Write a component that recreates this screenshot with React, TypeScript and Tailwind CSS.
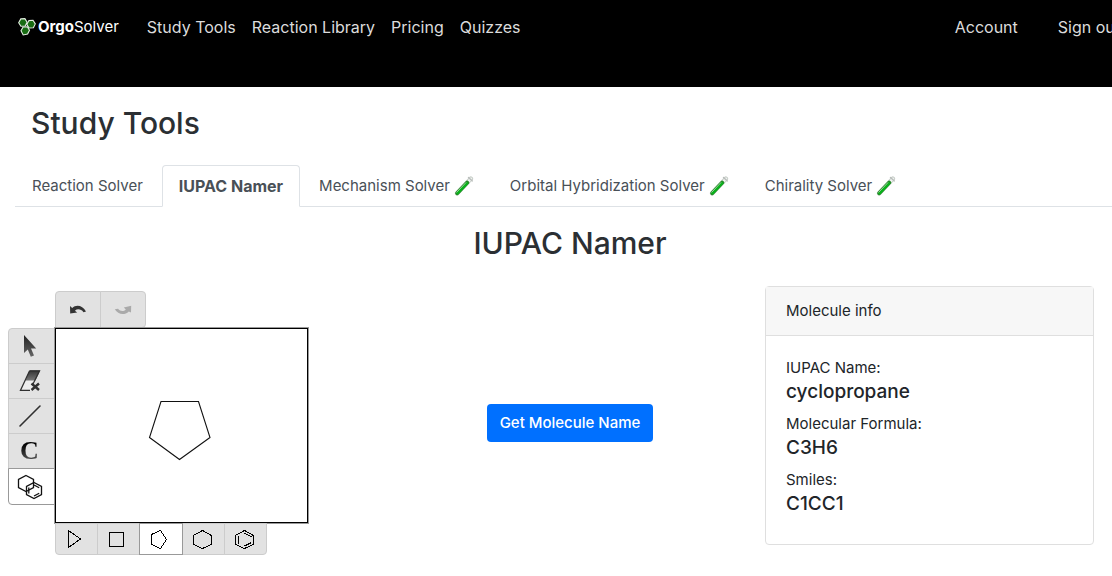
import React from "react";

const navLinks = ["Study Tools", "Reaction Library", "Pricing", "Quizzes"];
const accountLinks = ["Account", "Sign out"];

const tabs = [
  { label: "Reaction Solver" },
  { label: "IUPAC Namer", active: true },
  { label: "Mechanism Solver", beta: true },
  { label: "Orbital Hybridization Solver", beta: true },
  { label: "Chirality Solver", beta: true },
];

const moleculeInfo = [
  { label: "IUPAC Name:", value: "cyclopropane" },
  { label: "Molecular Formula:", value: "C3H6" },
  { label: "Smiles:", value: "C1CC1" },
];

const LogoIcon = () => (
  <svg width="18" height="18" viewBox="0 0 18 18" fill="#176b12" stroke="#e4eee2" strokeWidth="1.1">
    <path d="M2.8.9 6.9.6 9.1 4.2 7.2 8 2.9 8.3.7 4.7Z" />
    <path d="M10.9 2.6 15 2.3 17.3 5.9 15.4 9.7 11 10 8.8 6.4Z" />
    <path d="M5.1 9 9.3 8.7 11.5 12.3 9.6 16.1 5.2 17 3 12.8Z" />
  </svg>
);

const TestTube = () => (
  <svg className="shrink-0" width="20" height="20" viewBox="0 0 20 20" fill="none" strokeLinecap="round">
    <path d="M3.2 17.3 16.8 2.8" stroke="#c9cfca" strokeWidth="4.6" />
    <path d="M3.2 17.3 16.8 2.8" stroke="#f1f4f1" strokeWidth="2.6" />
    <path d="M3.3 17.2 13.2 6.7" stroke="#258c28" strokeWidth="4" />
    <path d="M3.6 17.2 13.2 7.2" stroke="#08b51b" strokeWidth="2" />
    <path d="M2.8 16.2 11.8 6.7" stroke="#9bd69d" strokeWidth="1" />
    <path d="m14.5 1.5 3.8 3.4" stroke="#b9bdbb" strokeWidth="1.4" />
  </svg>
);

const CursorIcon = () => (
  <svg width="24" height="24" viewBox="0 0 24 24">
    <linearGradient id="cursor" x2="0" y2="1">
      <stop stopColor="#222" />
      <stop offset="1" stopColor="#666" />
    </linearGradient>
    <path d="M6 1v18l3.8-3.6 3 7.4 3.2-1.4-3-7h5.2Z" fill="url(#cursor)" />
  </svg>
);

const EraserIcon = () => (
  <svg width="24" height="24" viewBox="0 0 24 24" fill="none" stroke="#303030">
    <linearGradient id="eraser" x2="0" y2="1">
      <stop stopColor="#333" />
      <stop offset="1" stopColor="#777" />
    </linearGradient>
    <path d="M7.5 11h10L13 21.5H2.5Z" fill="#eee" stroke="none" />
    <path d="M11.5 1.5h10.5L17.5 11.5h-10Z" fill="url(#eraser)" stroke="none" />
    <path d="M11.5 2 2.5 21.3h9.5M11.5 2h10L14.5 16" strokeWidth="1.3" />
    <path d="m13.5 14.5 7.5 6.5M21 14.5 13.5 21" strokeWidth="2.4" />
  </svg>
);

const BondIcon = () => (
  <svg width="24" height="24" viewBox="0 0 24 24" stroke="#303030" strokeWidth="1.6" strokeLinecap="round">
    <path d="M2 22 22 2" />
  </svg>
);

const RingsIcon = () => (
  <svg width="26" height="26" viewBox="0 0 26 26" fill="none" stroke="#111" strokeWidth="1.3">
    <path d="m9 1.5 7.5 4v8L9 17.5l-7.5-4v-8Z" />
    <path d="m17 8.5 7.5 4v8l-7.5 4-7.5-4v-8Z" />
    <path d="M11.8 13.5v6M17 11l5.2 2.8M17 22l5.2-2.8" />
  </svg>
);

const UndoIcon = () => (
  <svg width="18" height="10" viewBox="0 0 18 10">
    <path d="m1 1 .2 7.5 7-1-2.3-1.8C8.5 3.5 12 4 14.5 7.2L17 6.5C13.8.5 7.2-.8 3.2 3Z" fill="#333" />
  </svg>
);

const RedoIcon = () => (
  <svg width="18" height="10" viewBox="0 0 18 10">
    <path d="m17.2.8-.2 6.6-2.2-1C10.5 10.6 4 9.6.8 4.2L4 3.8c2.4 2.8 5.6 3 7.8.6L9.8 2.6Z" fill="#aaa" />
  </svg>
);

const drawTools = [
  { label: "Select", icon: <CursorIcon /> },
  { label: "Erase", icon: <EraserIcon /> },
  { label: "Bond", icon: <BondIcon /> },
  {
    label: "Carbon",
    icon: (
      <span className="bg-linear-to-b from-black to-[#666] bg-clip-text font-['Liberation_Serif',serif] text-[26px] leading-6 text-transparent font-bold">
        C
      </span>
    ),
  },
  { label: "Rings", icon: <RingsIcon />, active: true },
];

const rings = [
  { label: "Cyclopropane ring", d: "M4.5 2.5v17l12-8.5Z" },
  { label: "Cyclobutane ring", d: "M3.5 4.5h14v14h-14Z" },
  { label: "Cyclopentane ring", d: "m2.5 6.5 9-4 6 9-6 9-9-4Z", active: true },
  { label: "Cyclohexane ring", d: "m11.5 2.5 9 5v9l-9 4-9-4v-9Z" },
  { label: "Benzene ring", d: "m11.5 2.5 9 5v9l-9 4-9-4v-9ZM5.5 7.5v8M11.5 5l7 4M11.5 18l7-3.5" },
];

const Header = () => (
  <header className="flex justify-between bg-black pt-[15px] pb-12 pl-[18px] text-base leading-6 whitespace-nowrap text-[#dcdcdc]">
    <nav className="flex gap-4">
      <a href="#" className="mr-3 flex items-center gap-0.5 text-[15px] text-white">
        <LogoIcon />
        <span>
          <b>Orgo</b>Solver
        </span>
      </a>
      {navLinks.map((item) => (
        <a href="#" key={item}>
          {item}
        </a>
      ))}
    </nav>
    <div className="-mr-2 flex gap-10">
      {accountLinks.map((item) => (
        <a href="#" key={item}>
          {item}
        </a>
      ))}
    </div>
  </header>
);

const Tabs = () => (
  <nav className="ml-[15px] flex gap-0.5 border-b border-[#dee2e6] text-[15px] leading-6 whitespace-nowrap text-[#495057]">
    {tabs.map((tab) => (
      <a
        href="#"
        key={tab.label}
        className={
          tab.active
            ? "-mb-px rounded-t border border-[#dee2e6] border-b-white bg-white px-4 py-2 text-base font-bold"
            : "-mb-px flex items-center gap-1 border border-transparent px-4 py-2"
        }
      >
        {tab.label}
        {tab.beta && <TestTube />}
      </a>
    ))}
  </nav>
);

const MoleculeEditor = () => (
  <div className="grid grid-cols-[47px_253px] pt-[5px]">
    <div className="col-start-2 flex">
      <button aria-label="Undo" className="flex h-[37px] w-[46px] items-center justify-center rounded-tl border border-[#ccc] bg-[#e2e2e2]">
        <UndoIcon />
      </button>
      <button aria-label="Redo" className="-ml-px flex h-[37px] w-[46px] items-center justify-center rounded-r border border-[#ccc] bg-[#e2e2e2]">
        <RedoIcon />
      </button>
    </div>
    <div className="flex flex-col">
      {drawTools.map((tool) => (
        <button
          key={tool.label}
          aria-label={tool.label}
          className={
            tool.active
              ? "flex h-[37px] items-center justify-center rounded-bl border border-[#999] bg-white pr-1"
              : "-mb-px flex h-9 items-center justify-center border border-[#ccc] bg-[#e2e2e2] pr-1 first:rounded-tl"
          }
        >
          {tool.icon}
        </button>
      ))}
    </div>
    <div className="h-[195px] border border-black bg-white shadow-[0_0_0_1px_#999]">
      <svg className="size-full" viewBox="56 329 251 193" fill="none" stroke="#111" strokeWidth="1.1">
        <path d="M161 401.5h37.5l11.5 36-30.5 22-30-22Z" />
      </svg>
    </div>
    <div className="col-start-2 flex">
      {rings.map((ring) => (
        <button
          key={ring.label}
          aria-label={ring.label}
          className={
            ring.active
              ? "relative -mr-px flex h-8 w-11 items-center justify-center border border-[#999] bg-white pr-0.5"
              : "-mr-px flex h-8 w-[43px] items-center justify-center border border-[#ccc] bg-[#e2e2e2] pr-0.5 first:rounded-bl last:rounded-br"
          }
        >
          <svg width="23" height="23" viewBox="0 0 23 23" fill="none" stroke="#000" shapeRendering="crispEdges">
            <path d={ring.d} />
          </svg>
        </button>
      ))}
    </div>
  </div>
);

const MoleculeCard = () => (
  <section className="rounded border border-[#dfdfdf] text-[#212529]">
    <h3 className="border-b border-[#dfdfdf] bg-[#f7f7f7] px-5 py-3 text-[15px] leading-6">Molecule info</h3>
    <dl className="p-5">
      {moleculeInfo.map((item) => (
        <div className="mb-2" key={item.label}>
          <dt className="text-[15px] leading-6">{item.label}</dt>
          <dd className="text-[19px] leading-6 font-medium">{item.value}</dd>
        </div>
      ))}
    </dl>
  </section>
);

const App = () => {
  return (
    <div className="min-h-screen overflow-hidden bg-white font-['Inter',sans-serif]">
      <Header />
      <main>
        <h1 className="pt-[17px] pb-[23px] pl-[31px] text-[30px] leading-[38px] font-medium text-[#2b2f33]">
          Study Tools
        </h1>
        <Tabs />
        <div className="-mr-3 pl-2">
          <h2 className="pt-[17px] pb-6 pl-2 text-center text-[30px] leading-[38px] font-medium text-[#2b2f33]">
            IUPAC Namer
          </h2>
          <div className="grid grid-cols-3">
            <MoleculeEditor />
            <div className="flex items-center justify-center pt-1 pl-2">
              <button className="rounded bg-[#0070ff] px-[13px] py-[7px] text-[15px] leading-6 font-medium text-white">
                Get Molecule Name
              </button>
            </div>
            <div className="pr-[30px] pl-[13px]">
              <MoleculeCard />
            </div>
          </div>
        </div>
      </main>
    </div>
  );
};

export default App;
